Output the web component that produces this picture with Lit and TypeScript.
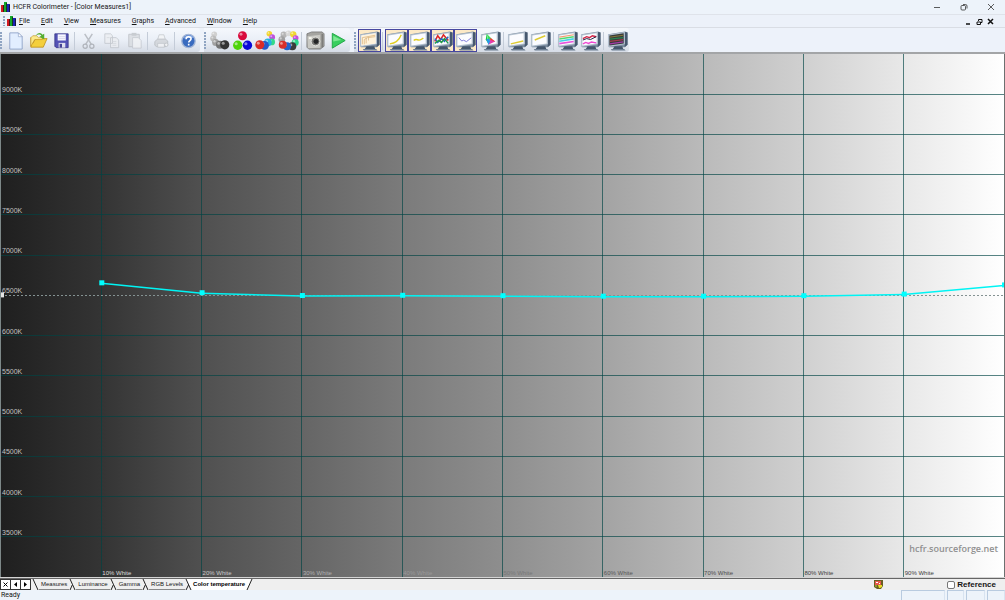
import { LitElement, html, svg, css, nothing } from "lit";
import { customElement, state } from "lit/decorators.js";
import { classMap } from "lit/directives/class-map.js";

const T_MAX = 9500;
const T_MIN = 3000;
const READINGS = [6650, 6527, 6492, 6495, 6490, 6484, 6484, 6490, 6510, 6624];
const LABEL_SHADES = ["#dcdcdc", "#cacaca", "#b0b0b0", "#999", "#787878", "#585858", "#4c4c4c", "#404040", "#404040"];

const yOf = (t: number) => `${((T_MAX - t) / (T_MAX - T_MIN)) * 100}%`;
const xOf = (level: number) => `${level * 10}%`;

const monitor = (content: unknown, screen = "#fbfcff") => svg`
  <path d="M1.500 4.500 19 1.500 21.500 2.500V15.500l-3 2.500L2 18z" fill="#7b8c9f"/>
  <path d="M18.500 2 21.500 2.500V15.500l-3 2.500z" fill="#46586e"/>
  <path d="M8 17h8l1 3H6z" fill="#44566b"/><path d="M4 20h14l1.500 1.500H5z" fill="#6d7e92"/>
  <path d="M1 4.800 18.800 2V15L1 17.800z" fill="#b3c0ce"/>
  <path d="M2.500 5.800 17.500 3.300V14.200L2.500 16.300z" fill="${screen}"/>
  ${content}`;

const ball = (x: number, y: number, r: number, c: string) => svg`
  <circle cx=${x} cy=${y} r=${r} fill=${c}/>
  <circle cx=${x - r / 3} cy=${y - r / 3} r=${r / 3} fill="#fff" opacity=".5"/>`;

const ICONS: Record<string, unknown> = {
  new: svg`<path d="M5 3h9l4 4v13H5z" fill="#e2eeff" stroke="#8096c0" stroke-width=".8"/><path d="M14 3v4h4z" fill="#fff" stroke="#8096c0" stroke-width=".6"/>`,
  open: svg`<path d="M3 8V18h13l4-9H8L5 14V8z" fill="#f4cf3c" stroke="#b98a16" stroke-width=".8"/><path d="M3 8l2-2h4l2 2h4v2H7l-4 7z" fill="#fbe98a" stroke="#b98a16" stroke-width=".6"/><path d="M8 6c3-4 6-3 7-1l2-1v6l-5-3 2-1c-1-1.500-3-2-6 0z" fill="#54ad32"/>`,
  save: svg`<path d="M4 4h14v14.500H5.500L4 17z" fill="#5352b5" stroke="#353486" stroke-width=".8"/><path d="M7 4.500h8.500v6.500H7z" fill="#f7f7ff"/><path d="M8 13.500h7v5H8z" fill="#dfe0ee"/><path d="M9 14.500h2.500v4H9z" fill="#434293"/><path d="M8 7h7M8 9h7" stroke="#c0c0df" stroke-width=".6"/>`,
  cut: svg`<path d="M7 4l7 11M15 4 8 15" stroke="#a9adb3" stroke-width="1.500"/><circle cx="7.500" cy="17" r="2.200" fill="none" stroke="#a0a4aa" stroke-width="1.300"/><circle cx="14.500" cy="17" r="2.200" fill="none" stroke="#a0a4aa" stroke-width="1.300"/>`,
  copy: svg`<path d="M4 4h6l2 2v8H4zM10 8h6l2.500 2.500V18.500H10z" fill="#eceef1" stroke="#b8bcc2" stroke-width=".9"/><path d="M12 12h4M12 14h4M12 16h4M6 8h3" stroke="#c6c9ce" stroke-width=".7"/>`,
  paste: svg`<path d="M5 4.500h11v13H5z" fill="#d8dbdf" stroke="#b4b8be"/><path d="M8 3h5v3H8z" fill="#bbbfc4"/><path d="M9 8h6l3 3v8H9z" fill="#f1f2f4" stroke="#b8bcc2" stroke-width=".8"/>`,
  print: svg`<path d="M7 10 8.500 5h5L15 10z" fill="#f4f5f6" stroke="#b6babf" stroke-width=".8"/><path d="M4 12l3-2.500h8l2.500 2V15L15 17.500H6L4 16z" fill="#cfd2d6" stroke="#a9adb2" stroke-width=".8"/><path d="M7 14h7v4H7z" fill="#f2f3f5" stroke="#b0b4b9" stroke-width=".7"/><circle cx="16" cy="15.500" r="1.800" fill="#f5f5f6" stroke="#a9adb2" stroke-width=".8"/>`,
  help: svg`<circle cx="11" cy="11.500" r="7" fill="#396bbf" stroke="#a3b6d6" stroke-width="1.400"/><path d="M6 9c1-4 8-5 10-1-3 1-6 0-10 1z" fill="#86abe8"/><path d="M8.500 9.700c0-3.500 5.200-3.300 5.200-.5 0 2-2.500 2-2.500 4M11.200 14.500v1.800" fill="none" stroke="#fff" stroke-width="1.700"/>`,
  grays: svg`${ball(5.500, 4.500, 3, "#d0d0d0")}${ball(4.500, 9, 3.200, "#bcbcbc")}${ball(7, 13, 3.700, "#a0a0a0")}${ball(11.500, 15.500, 4.200, "#747474")}${ball(16.500, 15.500, 4.800, "#343434")}`,
  primaries: svg`${ball(11, 6, 4.700, "#d90b3c")}${ball(6, 16, 4.900, "#4ed308")}${ball(16.200, 16, 4.900, "#0908d8")}`,
  saturations: svg`${ball(15, 4, 2.900, "#f1d52b")}${ball(18, 7.500, 3, "#bd52dc")}${ball(17.500, 12.500, 3.500, "#35d989")}${ball(13.500, 13, 4, "#25b0e0")}${ball(10, 16, 4.600, "#2458c9")}${ball(5, 15.500, 4.700, "#d92b26")}`,
  ring: svg`${ball(6, 5, 3.300, "#b5b5b5")}${ball(11, 3.500, 3, "#d8d8d8")}${ball(16, 4.500, 3.300, "#f0d832")}${ball(18.500, 8.500, 3, "#c64de0")}${ball(18, 13, 3.700, "#2ad78c")}${ball(4, 10, 3.500, "#a0a0a0")}${ball(15, 17, 4.200, "#3c3c3c")}${ball(9.500, 17, 4.200, "#2464cc")}${ball(5, 15.500, 4.200, "#d9302a")}`,
  camera: svg`<path d="M2 4 7 2h11l2 2v13l-4 3H4l-2-2z" fill="#a5a5a1" stroke="#666" stroke-width=".7"/><path d="M2.500 6.500 16 5v13.500L3 19z" fill="#c9c9c4"/><circle cx="11" cy="12" r="4.600" fill="#777774" stroke="#e8e8e4"/><circle cx="11.500" cy="12" r="2.600" fill="#242526"/><path d="M4 7.500h3v2H4z" fill="#f8f8ef"/><path d="M18 4v14" stroke="#686868"/>`,
  play: svg`<path d="M4.500 3.500 18 11 4.500 19z" fill="#39cf5f" stroke="#23a647" stroke-width="1" stroke-linejoin="round"/><path d="M5.500 6 14 10.500 5.500 12z" fill="#7ee894"/>`,
  measures: monitor(svg`<path d="M2.500 5.800 17.500 3.300V14.200L2.500 16.300z" fill="#fff3dc"/><path d="M3.500 15V8L17 5.500M5.500 15V10L9 8 17 7M7.500 8v6M10 8v3" fill="none" stroke="#dcb47c" stroke-width=".8"/>`),
  luminance: monitor(svg`<path d="M4 14.500C10 14 14 10 16 5" fill="none" stroke="#dfce21" stroke-width="1.500"/>`),
  gamma: monitor(svg`<path d="M5 11c2-2 3-1 5-.5s3-.5 5-2" fill="none" stroke="#dfce21" stroke-width="1.500"/>`),
  rgb: monitor(svg`<path d="M3 12 6 6l3 4 3-5 5 6" fill="none" stroke="#df2723" stroke-width="1.700"/><path d="M3 9l3 4 4-4 3 3 4-5" fill="none" stroke="#246ac5" stroke-width="1.500"/><path d="M3 14l4-3 3 2 3-4 4 5" fill="none" stroke="#219847" stroke-width="1.500"/>`),
  temperature: monitor(svg`<path d="M4 8 7 11.500l2-.8 3 1.500 5-4" fill="none" stroke="#7d79d8" stroke-width="1"/>`),
  cie: monitor(svg`<path d="M7 4 9 15 6 10z" fill="#13c644"/><path d="M7 4l5 5-3 3z" fill="#38df58"/><path d="M11 8l5 4-6 1z" fill="#ee3f29"/><path d="M8.500 15.500l7.500-3.500-6-2z" fill="#e43dac"/><path d="M6.500 10l3-1 1 3-1.500 3.500z" fill="#259bea"/>`),
  near0: monitor(svg`<path d="M4 14.500 17 11.500" stroke="#ddcb32" stroke-width="1.500"/>`),
  near100: monitor(svg`<path d="M5 10.500 16 6" stroke="#ddcb32" stroke-width="1.500"/>`),
  satLum: monitor(svg`<path d="M2.500 7.500 17.500 5" stroke="#f49a72" stroke-width="1.200"/><path d="M2.500 9.500 17.500 7" stroke="#51d970" stroke-width="1.700"/><path d="M2.500 11.800 17.500 9.300" stroke="#45cfe8" stroke-width="1.700"/><path d="M2.500 14.300 17.500 12" stroke="#e952db" stroke-width="1.700"/>`),
  satShift: monitor(svg`<path d="M3 9 7 7l3 1 3-2 4 1" fill="none" stroke="#d22547" stroke-width="1.500"/><path d="M3 10.500l4-1.500 4 1 6-3" fill="none" stroke="#1c1c3d"/><path d="M3 14.500l3-1.500 3 1 3-1.500 5 1" fill="none" stroke="#ef47d2" stroke-width="1.500"/>`),
  combined: monitor(svg`<path d="M3 7.500 17 5.500" stroke="#8c7a3a" stroke-width="1"/><path d="M3 9.500 17 8" stroke="#2c8452" stroke-width="1.200"/><path d="M3 12 17 10" stroke="#a23b4b" stroke-width="1.400"/><path d="M3 14.500 17 12.500" stroke="#a63baa" stroke-width="1.400"/>`, "#363b3a"),
};

type Tool = { icon?: string; label?: string; off?: boolean; on?: boolean };
const t = (icon: string, label: string, extra: Partial<Tool> = {}): Tool => ({ icon, label, ...extra });
const SEP: Tool = {};
const BANDS: Tool[][] = [
  [t("new", "New"), t("open", "Open"), t("save", "Save"), SEP, t("cut", "Cut", { off: true }), t("copy", "Copy", { off: true }), t("paste", "Paste", { off: true }), SEP, t("print", "Print", { off: true }), SEP, t("help", "Help")],
  [t("grays", "Measure gray scale"), t("primaries", "Measure primaries"), t("saturations", "Measure saturations"), t("ring", "Measure everything"), SEP, t("camera", "Capture"), t("play", "Continuous measures")],
  [t("measures", "Measures", { on: true }), SEP, t("luminance", "Luminance", { on: true }), t("gamma", "Gamma", { on: true }), t("rgb", "RGB levels", { on: true }), t("temperature", "Color temperature", { on: true }), t("cie", "CIE diagram"), SEP, t("near0", "Near black"), t("near100", "Near white"), SEP, t("satLum", "Saturation luminance"), t("satShift", "Saturation shift"), SEP, t("combined", "Combined graphs")],
];
const MENUS = ["File", "Edit", "View", "Measures", "Graphs", "Advanced", "Window", "Help"];
const TABS = ["Measures", "Luminance", "Gamma", "RGB Levels", "Color temperature"];

const logo = html`<svg class="logo" viewBox="0 0 9 10" aria-hidden="true">
  <path d="M0 3h3v7H0z" fill="#d41a22"/><path d="M3 0h3v10H3z" fill="#15a82c"/><path d="M6 2h3v8H6z" fill="#1d22b4"/>
  <path d="M2.500 3v7M5.500 1v9M8.500 3v7" stroke="#111" stroke-width=".7"/></svg>`;

@customElement("temperature-chart")
class TemperatureChart extends LitElement {
  static styles = css`
    :host { display: block; position: relative; min-height: 0; border-left: 1px solid #7d8888; border-right: 1px solid #6c7070;
      background: linear-gradient(90deg, #1f1f1f, #343434 10%, #505050 20%, #656565 30%, #7b7b7b 40%, #8e8e8e 50%, #a3a3a3 60%, #bababa 70%, #d0d0d0 80%, #e8e8e8 90%, #fff); }
    .plot { position: absolute; inset: 0; display: block; width: 100%; height: 100%; font: 7px "Liberation Sans", Arial, sans-serif; }
    .x-label { font-size: 6px; }
    .grid { stroke: #004444; stroke-opacity: .66; stroke-width: 1; shape-rendering: crispEdges; }
    .target { stroke: #849292; stroke-width: 1; stroke-dasharray: 2 2; shape-rendering: crispEdges; }
    .trace { stroke: #00f4f4; stroke-width: 1.5; }
    .mark { fill: #00ffff; }
    .brand { position: absolute; right: 6px; bottom: 21px; font: 600 9px/14px "Open Sans", "Liberation Sans", sans-serif; color: #909090; text-decoration: none; }
  `;
  render() {
    const temps = Array.from({ length: 12 }, (_, i) => 9000 - i * 500);
    const levels = [1, 2, 3, 4, 5, 6, 7, 8, 9];
    return html`
      <svg class="plot" role="img" aria-label="Color temperature">
        ${levels.map((l) => svg`<line class="grid" x1=${xOf(l)} x2=${xOf(l)} y1="0" y2="100%"/>`)}
        ${temps.map((v) => svg`
          <line class=${v === 6500 ? "target" : "grid"} x1="0" x2="100%" y1=${yOf(v)} y2=${yOf(v)}/>
          <text x="1" y=${yOf(v)} dy="-2" fill="#c0c0c0">${v}K</text>`)}
        ${levels.map((l) => svg`<text class="x-label" x=${xOf(l)} dx="1" y="100%" dy="-2" fill=${LABEL_SHADES[l - 1]}>${l * 10}% White</text>`)}
        ${READINGS.slice(1).map((v, i) => svg`<line class="trace" x1=${xOf(i + 1)} y1=${yOf(READINGS[i])} x2=${xOf(i + 2)} y2=${yOf(v)}/>`)}
        ${READINGS.map((v, i) => svg`<rect class="mark" x=${xOf(i + 1)} y=${yOf(v)} width="5" height="5" transform="translate(-2 -3)"/>`)}
        <rect x="0" y=${yOf(6500)} width="3" height="5" transform="translate(0 -3)" fill="#e4e4e4"/>
      </svg>
      <a class="brand" href="#">hcfr.sourceforge.net</a>`;
  }
}

@customElement("app-root")
class AppRoot extends LitElement {
  @state() private tab = 4;

  static styles = css`
    :host { display: grid; grid-template-rows: 14px 14px 26px minmax(0, 1fr) 13px 10px; height: 100vh; overflow: hidden;
      background: #edf3fa; color: #151515; font: 7px/12px Roboto, "Noto Sans", sans-serif; box-sizing: border-box; }
    button { font: inherit; color: inherit; background: none; border: 0; margin: 0; padding: 0; white-space: nowrap; }
    svg { display: block; }
    .title, .menu { display: flex; align-items: center; }
    .title { padding-left: 1px; gap: 3px; }
    .logo { width: 9px; height: 10px; }
    .spacer { flex: 1; }
    .window-buttons { display: flex; padding-right: 1px; }
    .window-buttons button { width: 27px; display: grid; place-items: center; }
    .window-buttons svg { width: 8px; height: 8px; fill: none; stroke: #333; stroke-width: .8; }
    .menu { background: #ecf1f9; border-top: 1px solid #dfe3ea; border-bottom: 1px solid #d9dde4; box-sizing: border-box; padding-left: 3px; }
    .grip { width: 4px; flex: none; align-self: stretch; margin: 3px 0; background: radial-gradient(circle at 1px 1px, #8fa4c2 0 1px, transparent 1px) 0 0 / 4px 3px; }
    .menu .grip { margin: 1px 0; }
    .items { display: flex; gap: 11px; padding-left: 3px; }
    .items u { text-underline-offset: 1px; }
    .mdi { display: flex; padding-right: 9px; }
    .mdi button { width: 11px; display: grid; place-items: center; }
    .mdi svg { width: 7px; height: 7px; fill: none; stroke: #111; stroke-width: 1.5; }
    .toolbar { display: flex; gap: 4px; background: #edf2fa; border-bottom: 2px solid #a3a5a7; box-sizing: border-box; }
    .band { display: flex; align-items: center; padding-top: 1px; border-radius: 0 3px 3px 0; background: linear-gradient(#f5f8fd, #eaeff7 50%, #d6dce6); }
    .tool { width: 23px; height: 23px; display: grid; place-items: center; box-sizing: border-box; border: 1px solid transparent; }
    .tool svg { width: 21px; height: 21px; }
    .tool:disabled svg { opacity: .75; }
    .tool.on { background: #fce9c6; border-color: #4647a0; }
    .tool.on + .tool:not(.on) { margin-left: 2px; }
    .sep { width: 1px; height: 18px; margin: 0 2px 0 1px; background: #c4ccd8; }
    .tabs { display: flex; align-items: stretch; background: #efefef; border-top: 1px solid #d4d4d4; box-shadow: inset 0 1px #666; padding-top: 1px; box-sizing: border-box; font: 6px/10px "Liberation Sans", Arial, sans-serif; }
    .nav { display: grid; place-items: center; width: 11px; height: 11px; border: 1px solid #333; background: #fff; box-sizing: border-box; margin-right: -1px; }
    .nav svg { width: 7px; height: 7px; }
    .slant { width: 7px; height: 11px; flex: none; fill: none; stroke: #222; stroke-width: 1; }
    .slant.first { margin-left: 2px; }
    .tab { padding: 0 2px; border-bottom: 1px solid #888; }
    .tab.active { background: #fff; font-weight: bold; color: #000; border-color: #fff; padding: 0 1px; }
    .bug { width: 9px; height: 9px; margin: 1px 64px 0 0; }
    .reference { display: flex; align-items: center; gap: 2px; padding-right: 9px; font: bold 8px/11px "Liberation Sans", Arial, sans-serif; }
    .reference input { appearance: none; width: 8px; height: 8px; margin: 0; border: 1px solid #777; border-radius: 2px; background: #fff; }
    .status { display: grid; grid-template-columns: 1fr 44px 17px 19px 18px; gap: 2px; line-height: 11px; padding-left: 1px; }
    .pane { border-left: 1px solid #b9cbe0; border-top: 1px solid #b9cbe0; border-right: 1px solid #d8e3f0; }
  `;

  private slant(i: number) {
    const body = i === 0
      ? svg`<path d="M1 0 6 11"/>`
      : i === TABS.length
        ? svg`<path d="M0 0H6L1 11H0z" fill="#fff" stroke="none"/><path d="M6 0 1 11"/>`
        : i === TABS.length - 1
          ? svg`<path d="M1 0H7V11H6z" fill="#fff" stroke="none"/><path d="M1 0 6 11M3.500 6 1 11"/>`
          : svg`<path d="M1 0 3.500 5.500 1 11M3.500 5.500 6 11"/>`;
    return html`<svg class=${classMap({ slant: true, first: i === 0 })} viewBox="0 0 7 11" aria-hidden="true">${body}</svg>`;
  }

  render() {
    return html`
      <header class="title">${logo}<span>HCFR Colorimeter - [Color Measures1]</span><span class="spacer"></span>
        <div class="window-buttons">
          <button aria-label="Minimize"><svg viewBox="0 0 8 8"><path d="M1 4.500h6"/></svg></button>
          <button aria-label="Restore"><svg viewBox="0 0 8 8"><rect x="1" y="2.500" width="4.500" height="4.500" rx="1"/><path d="M3 1.500h2.500q1.500 0 1.500 1.500v2.500"/></svg></button>
          <button aria-label="Close"><svg viewBox="0 0 8 8"><path d="M1 1l6 6M7 1 1 7"/></svg></button>
        </div>
      </header>
      <nav class="menu"><span class="grip"></span>${logo}
        <div class="items">${MENUS.map((m) => html`<button><u>${m[0]}</u>${m.slice(1)}</button>`)}</div>
        <span class="spacer"></span>
        <div class="mdi">
          <button aria-label="Minimize document"><svg viewBox="0 0 7 7"><path d="M1 6h4"/></svg></button>
          <button aria-label="Restore document"><svg viewBox="0 0 7 7"><path d="M1 4h3.500v2.500H1zM2.500 3V1.500H6v3H5" stroke-width="1"/></svg></button>
          <button aria-label="Close document"><svg viewBox="0 0 7 7"><path d="M1 1l5 5M6 1 1 6"/></svg></button>
        </div>
      </nav>
      <div class="toolbar" role="toolbar">
        ${BANDS.map((band) => html`<div class="band"><span class="grip"></span>${band.map((b) => b.icon
          ? html`<button class=${classMap({ tool: true, on: !!b.on })} ?disabled=${b.off} aria-label=${b.label ?? nothing}><svg viewBox="0 0 22 22">${ICONS[b.icon]}</svg></button>`
          : html`<span class="sep"></span>`)}</div>`)}
      </div>
      <temperature-chart></temperature-chart>
      <div class="tabs">
        <button class="nav" aria-label="Close view"><svg viewBox="0 0 7 7"><path d="M1.500 1.500l4 4M5.500 1.500l-4 4" stroke="#000"/></svg></button>
        <button class="nav" aria-label="Previous view"><svg viewBox="0 0 7 7"><path d="M5 1v5L2 3.500z"/></svg></button>
        <button class="nav" aria-label="Next view"><svg viewBox="0 0 7 7"><path d="M2 1v5l3-2.500z"/></svg></button>
        ${TABS.map((name, i) => html`${this.slant(i)}<button class=${classMap({ tab: true, active: this.tab === i })} @click=${() => (this.tab = i)}>${name}</button>`)}
        ${this.slant(TABS.length)}
        <span class="spacer"></span>
        <svg class="bug" viewBox="0 0 9 9" aria-hidden="true"><path d="M0 0h9v6L7 9H3L0 7z" fill="#6b5f20"/><path d="M1 1h6v4H1z" fill="#e8584c"/><path d="M2 2h2v1H2zM5 3h1v1H5z" fill="#fff"/><path d="M4 5h4v2L6 8H5z" fill="#e9df23"/><path d="M1 5h2v2H1z" fill="#8e9b2d"/></svg>
        <label class="reference"><input type="checkbox" />Reference</label>
      </div>
      <footer class="status"><span>Ready</span><span class="pane"></span><span class="pane"></span><span class="pane"></span><span class="pane"></span></footer>`;
  }
}
